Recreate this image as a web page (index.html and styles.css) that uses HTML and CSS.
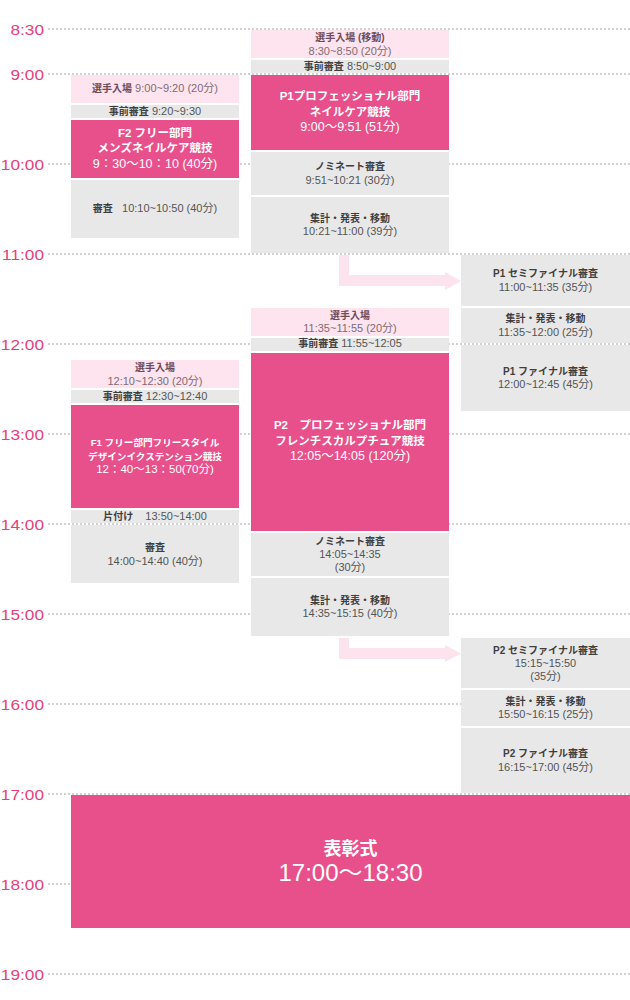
FILE: index.html
```html
<!DOCTYPE html>
<html lang="ja">
<head>
<meta charset="utf-8">
<title>タイムテーブル</title>
<link rel="stylesheet" href="styles.css">
</head>
<body>
<div class="tt">
  <div class="hour" style="grid-row:1"><span class="hl">8:30</span><span class="hr"></span></div>
  <div class="hour" style="grid-row:31"><span class="hl">9:00</span><span class="hr"></span></div>
  <div class="hour" style="grid-row:91"><span class="hl">10:00</span><span class="hr"></span></div>
  <div class="hour" style="grid-row:151"><span class="hl">11:00</span><span class="hr"></span></div>
  <div class="hour" style="grid-row:211"><span class="hl">12:00</span><span class="hr"></span></div>
  <div class="hour" style="grid-row:271"><span class="hl">13:00</span><span class="hr"></span></div>
  <div class="hour" style="grid-row:331"><span class="hl">14:00</span><span class="hr"></span></div>
  <div class="hour" style="grid-row:391"><span class="hl">15:00</span><span class="hr"></span></div>
  <div class="hour" style="grid-row:451"><span class="hl">16:00</span><span class="hr"></span></div>
  <div class="hour" style="grid-row:511"><span class="hl">17:00</span><span class="hr"></span></div>
  <div class="hour" style="grid-row:571"><span class="hl">18:00</span><span class="hr"></span></div>
  <div class="hour" style="grid-row:631"><span class="hl">19:00</span><span class="hr"></span></div>

  <!-- left column -->
  <div class="blk pink l" style="grid-row:31/51"><p><b>選手入場</b> 9:00~9:20 (20分)</p></div>
  <div class="blk gray l" style="grid-row:51/61"><p><b>事前審査</b> 9:20~9:30</p></div>
  <div class="blk mag l" style="grid-row:61/101"><p><b>F2 フリー部門</b></p><p><b>メンズネイルケア競技</b></p><p>9：30〜10：10 (40分)</p></div>
  <div class="blk gray l" style="grid-row:101/141"><p><b>審査</b>&nbsp;&nbsp; 10:10~10:50 (40分)</p></div>
  <div class="blk pink l" style="grid-row:221/241"><p><b>選手入場</b></p><p>12:10~12:30 (20分)</p></div>
  <div class="blk gray l" style="grid-row:241/251"><p><b>事前審査</b> 12:30~12:40</p></div>
  <div class="blk mag small l" style="grid-row:251/321"><p><b>F1 フリー部門フリースタイル</b></p><p><b>デザインイクステンション競技</b></p><p>12：40〜13：50(70分)</p></div>
  <div class="blk gray l" style="grid-row:321/331"><p><b>片付け</b>&nbsp;&nbsp;&nbsp; 13:50~14:00</p></div>
  <div class="blk gray l" style="grid-row:331/371"><p><b>審査</b></p><p>14:00~14:40 (40分)</p></div>

  <!-- middle column -->
  <div class="blk pink m" style="grid-row:1/21"><p><b>選手入場 (移動)</b></p><p>8:30~8:50 (20分)</p></div>
  <div class="blk gray m" style="grid-row:21/31"><p><b>事前審査</b> 8:50~9:00</p></div>
  <div class="blk mag m" style="grid-row:31/82"><p><b>P1プロフェッショナル部門</b></p><p><b>ネイルケア競技</b></p><p>9:00〜9:51 (51分)</p></div>
  <div class="blk gray m" style="grid-row:82/112"><p><b>ノミネート審査</b></p><p>9:51~10:21 (30分)</p></div>
  <div class="blk gray m" style="grid-row:112/151"><p><b>集計・発表・移動</b></p><p>10:21~11:00 (39分)</p></div>
  <div class="blk pink m" style="grid-row:186/206"><p><b>選手入場</b></p><p>11:35~11:55 (20分)</p></div>
  <div class="blk gray m" style="grid-row:206/216"><p><b>事前審査</b> 11:55~12:05</p></div>
  <div class="blk mag m" style="grid-row:216/336"><p><b>P2　プロフェッショナル部門</b></p><p><b>フレンチスカルプチュア競技</b></p><p>12:05〜14:05 (120分)</p></div>
  <div class="blk gray m" style="grid-row:336/366"><p><b>ノミネート審査</b></p><p>14:05~14:35</p><p>(30分)</p></div>
  <div class="blk gray m" style="grid-row:366/406"><p><b>集計・発表・移動</b></p><p>14:35~15:15 (40分)</p></div>

  <!-- arrows -->
  <svg class="arrow" style="grid-row:151/span 24" width="210" height="36" viewBox="0 0 210 36"><path d="M88 0H98V20H194V17L210 26L194 35V31H88Z"/></svg>
  <svg class="arrow" style="grid-row:406/span 17" width="210" height="26" viewBox="0 0 210 26"><path d="M88 0H98V10H194V7L210 15.5L194 24V21H88Z"/></svg>

  <!-- right column -->
  <div class="blk gray r" style="grid-row:151/186"><p><b>P1 セミファイナル審査</b></p><p>11:00~11:35 (35分)</p></div>
  <div class="blk gray r" style="grid-row:186/211"><p><b>集計・発表・移動</b></p><p>11:35~12:00 (25分)</p></div>
  <div class="blk gray r" style="grid-row:211/256"><p><b>P1 ファイナル審査</b></p><p>12:00~12:45 (45分)</p></div>
  <div class="blk gray r" style="grid-row:406/441"><p><b>P2 セミファイナル審査</b></p><p>15:15~15:50</p><p>(35分)</p></div>
  <div class="blk gray r" style="grid-row:441/466"><p><b>集計・発表・移動</b></p><p>15:50~16:15 (25分)</p></div>
  <div class="blk gray r" style="grid-row:466/511"><p><b>P2 ファイナル審査</b></p><p>16:15~17:00 (45分)</p></div>

  <!-- award -->
  <div class="blk mag award" style="grid-row:511/601"><p class="aw-t">表彰式</p><p class="aw-tm">17:00〜18:30</p></div>
</div>
</body>
</html>
```

FILE: styles.css
```css
* { box-sizing: border-box; }
body {
  margin: 0;
  background: #fff;
  font-family: "Liberation Sans", "Noto Sans CJK JP", sans-serif;
}
p { margin: 0; }

.tt {
  width: 630px;
  display: grid;
  grid-template-columns: 71px 168px 12px 198px 12px 169px;
  grid-template-rows: repeat(640, 1.5px);
  padding-top: 29px;
}

.hour {
  grid-column: 1 / -1;
  align-self: start;
  height: 0;
  display: flex;
  align-items: center;
}
.hl {
  flex: none;
  width: 44px;
  text-align: right;
  font-size: 15px;
  line-height: 17px;
  color: #e8407a;
  transform: scaleX(1.15);
  transform-origin: right center;
}
.hr {
  flex: 1;
  margin-left: 4px;
  height: 2px;
  background: repeating-linear-gradient(90deg, #d2d2d2 0 2px, transparent 2px 4px);
}

.blk {
  margin: 1px 0;
  display: flex;
  flex-direction: column;
  justify-content: center;
  align-items: center;
  text-align: center;
  font-size: 11px;
  line-height: 12.5px;
  white-space: nowrap;
}
.blk b { font-size: 10px; }

.l { grid-column: 2; }
.m { grid-column: 4; }
.r { grid-column: 6; }
.award { grid-column: 2 / -1; }

.pink { background: #fde4ee; color: #7f6c75; }
.pink b { color: #6d4b5b; }
.gray { background: #e8e8e8; color: #555; }
.gray b { color: #3f3f3f; }
.mag { background: #e8508b; color: #fff; font-size: 12.5px; line-height: 15.5px; }
.mag b { font-size: 11.5px; }
.mag.small { font-size: 11.5px; line-height: 13.5px; }
.mag.small b { font-size: 9.6px; }

.aw-t { font-size: 18px; font-weight: bold; line-height: 22px; }
.aw-tm { font-size: 24px; line-height: 26px; }

.arrow {
  grid-column: 4 / 6;
  align-self: start;
  margin-top: 1px;
  display: block;
  fill: #fde3ed;
}
```
